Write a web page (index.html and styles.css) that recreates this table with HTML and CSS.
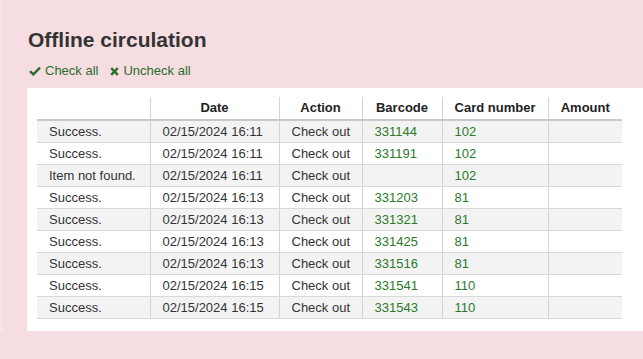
FILE: index.html
```html
<!DOCTYPE html>
<html>
<head>
<meta charset="utf-8">
<link rel="stylesheet" href="styles.css">
</head>
<body>
<div class="page">
  <h1 class="title">Offline circulation</h1>
  <div class="selectors">
    <a class="sel" href="#"><svg class="ico" viewBox="0 0 12 10" width="12" height="10"><path d="M1 5.2 L4.3 8.4 L11 1.6" fill="none" stroke="#2a6e2a" stroke-width="2.4" stroke-linejoin="miter"/></svg>Check all</a>
    <a class="sel" href="#"><svg class="ico" viewBox="0 0 9 9" width="9" height="9"><path d="M1.2 1.2 L7.8 7.8 M7.8 1.2 L1.2 7.8" fill="none" stroke="#2a6e2a" stroke-width="2.4"/></svg>Uncheck all</a>
  </div>
  <div class="panel">
    <table class="ops">
      <colgroup>
        <col class="c1"><col class="c2"><col class="c3"><col class="c4"><col class="c5"><col class="c6">
      </colgroup>
      <thead>
        <tr><th></th><th>Date</th><th>Action</th><th>Barcode</th><th>Card number</th><th>Amount</th></tr>
      </thead>
      <tbody>
        <tr><td>Success.</td><td>02/15/2024 16:11</td><td>Check out</td><td class="lnk">331144</td><td class="lnk">102</td><td></td></tr>
        <tr><td>Success.</td><td>02/15/2024 16:11</td><td>Check out</td><td class="lnk">331191</td><td class="lnk">102</td><td></td></tr>
        <tr><td>Item not found.</td><td>02/15/2024 16:11</td><td>Check out</td><td class="lnk"></td><td class="lnk">102</td><td></td></tr>
        <tr><td>Success.</td><td>02/15/2024 16:13</td><td>Check out</td><td class="lnk">331203</td><td class="lnk">81</td><td></td></tr>
        <tr><td>Success.</td><td>02/15/2024 16:13</td><td>Check out</td><td class="lnk">331321</td><td class="lnk">81</td><td></td></tr>
        <tr><td>Success.</td><td>02/15/2024 16:13</td><td>Check out</td><td class="lnk">331425</td><td class="lnk">81</td><td></td></tr>
        <tr><td>Success.</td><td>02/15/2024 16:13</td><td>Check out</td><td class="lnk">331516</td><td class="lnk">81</td><td></td></tr>
        <tr><td>Success.</td><td>02/15/2024 16:15</td><td>Check out</td><td class="lnk">331541</td><td class="lnk">110</td><td></td></tr>
        <tr><td>Success.</td><td>02/15/2024 16:15</td><td>Check out</td><td class="lnk">331543</td><td class="lnk">110</td><td></td></tr>
      </tbody>
    </table>
  </div>
</div>
</body>
</html>
```
FILE: styles.css
```css
html, body {
  margin: 0;
  padding: 0;
}
body {
  background: #f5dde2;
  font-family: "Liberation Sans", Arial, sans-serif;
  color: #333;
  height: 359px;
  overflow: hidden;
}
.page {
  border-left: 3px solid #f7e4e8;
  padding: 28px 0 0 24px;
}
.title {
  margin: 0;
  font-size: 21px;
  line-height: 24px;
  font-weight: bold;
  color: #333;
  padding-left: 1px;
}
.selectors {
  margin-top: 11px;
  height: 16px;
  font-size: 13px;
  line-height: 16px;
  display: flex;
  gap: 12px;
  padding-left: 2px;
}
.sel {
  color: #2a6e2a;
  text-decoration: none;
  display: inline-flex;
  align-items: center;
}
.sel .ico {
  margin-right: 4px;
}
.panel {
  margin-top: 9px;
  background: #fff;
  padding: 9px 21px 12px 10px;
}
.ops {
  border-collapse: collapse;
  width: 585px;
  table-layout: fixed;
  font-size: 13px;
}
.c1 { width: 113px; }
.c2 { width: 129px; }
.c3 { width: 83px; }
.c4 { width: 80px; }
.c5 { width: 106px; }
.c6 { width: 74px; }
.ops th {
  height: 22px;
  padding: 0 6px;
  font-weight: bold;
  color: #222;
  text-align: center;
  border-left: 1px solid #d4d4d4;
  border-bottom: 2px solid #c9c9c9;
  line-height: 22px;
}
.ops td {
  height: 21px;
  padding: 0 6px 0 12px;
  border-left: 1px solid #d4d4d4;
  border-bottom: 1px solid #d8d8d8;
  line-height: 21px;
  white-space: nowrap;
  color: #333;
}
.ops th:first-child,
.ops td:first-child {
  border-left: none;
}
.ops tbody tr:nth-child(odd) td {
  background: #f3f3f3;
}
.ops td.lnk {
  color: #2a7a2a;
}
```
